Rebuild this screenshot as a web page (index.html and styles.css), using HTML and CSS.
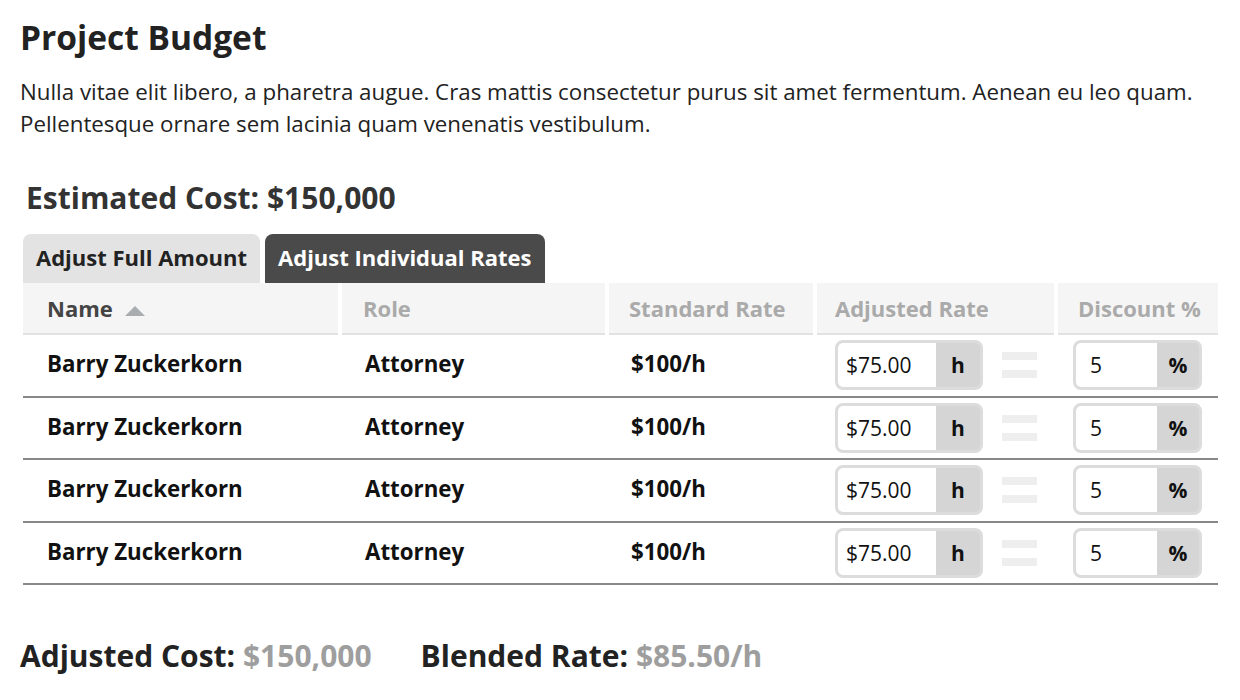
FILE: index.html
```html
<!DOCTYPE html>
<html lang="en">
<head>
<meta charset="utf-8">
<title>Project Budget</title>
<link rel="stylesheet" href="styles.css">
</head>
<body>
<main class="page">
  <h1 class="title">Project Budget</h1>
  <p class="intro">Nulla vitae elit libero, a pharetra augue. Cras mattis consectetur purus sit amet fermentum. Aenean eu leo quam.<br>Pellentesque ornare sem lacinia quam venenatis vestibulum.</p>

  <section class="budget">
    <h2 class="estimate">Estimated Cost: $150,000</h2>
    <div class="tabs">
      <button class="tab">Adjust Full Amount</button>
      <button class="tab tab-active">Adjust Individual Rates</button>
    </div>
    <table class="rates">
      <colgroup>
        <col class="c-name"><col class="c-role"><col class="c-std"><col class="c-adj"><col class="c-disc">
      </colgroup>
      <thead>
        <tr>
          <th class="h-name">Name <svg class="sort" width="20" height="10" viewBox="0 0 20 10"><polygon points="10,0 20,10 0,10" fill="#a9adb0"/></svg></th>
          <th class="h-role">Role</th>
          <th class="h-std">Standard Rate</th>
          <th class="h-adj">Adjusted Rate</th>
          <th class="h-disc">Discount %</th>
        </tr>
      </thead>
      <tbody>
        <tr>
          <td class="d-name">Barry Zuckerkorn</td><td class="d-role">Attorney</td><td class="d-std">$100/h</td>
          <td class="d-adj"><div class="adj-wrap"><div class="group g-rate"><span class="field">$75.00</span><span class="addon">h</span></div><span class="equals"><i></i><i></i></span></div></td>
          <td class="d-disc"><div class="group g-disc"><span class="field">5</span><span class="addon">%</span></div></td>
        </tr>
        <tr>
          <td class="d-name">Barry Zuckerkorn</td><td class="d-role">Attorney</td><td class="d-std">$100/h</td>
          <td class="d-adj"><div class="adj-wrap"><div class="group g-rate"><span class="field">$75.00</span><span class="addon">h</span></div><span class="equals"><i></i><i></i></span></div></td>
          <td class="d-disc"><div class="group g-disc"><span class="field">5</span><span class="addon">%</span></div></td>
        </tr>
        <tr>
          <td class="d-name">Barry Zuckerkorn</td><td class="d-role">Attorney</td><td class="d-std">$100/h</td>
          <td class="d-adj"><div class="adj-wrap"><div class="group g-rate"><span class="field">$75.00</span><span class="addon">h</span></div><span class="equals"><i></i><i></i></span></div></td>
          <td class="d-disc"><div class="group g-disc"><span class="field">5</span><span class="addon">%</span></div></td>
        </tr>
        <tr>
          <td class="d-name">Barry Zuckerkorn</td><td class="d-role">Attorney</td><td class="d-std">$100/h</td>
          <td class="d-adj"><div class="adj-wrap"><div class="group g-rate"><span class="field">$75.00</span><span class="addon">h</span></div><span class="equals"><i></i><i></i></span></div></td>
          <td class="d-disc"><div class="group g-disc"><span class="field">5</span><span class="addon">%</span></div></td>
        </tr>
      </tbody>
    </table>
  </section>

  <div class="totals">
    <div class="total">Adjusted Cost: <span class="total-value">$150,000</span></div>
    <div class="total">Blended Rate: <span class="total-value">$85.50/h</span></div>
  </div>
</main>
</body>
</html>
```

FILE: styles.css
```css
* { box-sizing: border-box; }

body {
  margin: 0;
  background: #fff;
  font-family: "Open Sans", Lato, sans-serif;
  color: #222;
}

.page {
  padding: 17px 20px 0 20px;
}

.title {
  margin: 0;
  font-size: 33.5px;
  line-height: 40px;
  font-weight: 700;
  color: #222;
}

.intro {
  margin: 19px 0 0 0;
  font-size: 22.3px;
  line-height: 32px;
  color: #222;
}

.budget {
  padding-left: 3px;
}

.estimate {
  margin: 40px 0 0 3px;
  font-size: 30px;
  line-height: 36px;
  font-weight: 700;
  color: #333;
}

.tabs {
  display: flex;
  gap: 5px;
  margin-top: 18px;
}

.tab {
  height: 49px;
  padding: 0 13px 4px 13px;
  border: 0;
  border-radius: 8px 8px 0 0;
  background: #e3e3e3;
  color: #222;
  font-family: inherit;
  font-size: 22px;
  font-weight: 700;
}

.tab-active {
  background: #4a4a4a;
  color: #fff;
}

.rates {
  width: 1195px;
  border-collapse: collapse;
  table-layout: fixed;
}

.c-name { width: 317px; }
.c-role { width: 267px; }
.c-std { width: 208px; }
.c-adj { width: 241px; }
.c-disc { width: 162px; }

.rates th {
  height: 51px;
  padding: 0 0 1px 20px;
  background: #f5f5f5;
  border-left: 4px solid #fff;
  border-bottom: 2px solid #e2e2e2;
  text-align: left;
  font-size: 22px;
  font-weight: 700;
  color: #aaa;
  white-space: nowrap;
}

.rates th.h-name {
  border-left: 0;
  padding-left: 24px;
  color: #444;
}
.rates th.h-role { padding-left: 21px; }
.rates th.h-std { padding-left: 20px; }
.rates th.h-adj { padding-left: 18px; }
.rates th.h-disc { padding-left: 20px; }

.sort {
  margin-left: 6px;
  vertical-align: 1px;
}

.rates td {
  height: 62.5px;
  padding: 0 0 3px 0;
  border-bottom: 2px solid #888;
  font-size: 22.3px;
  font-weight: 700;
  color: #111;
}

.d-name { padding-left: 24px !important; }
.d-role { padding-left: 25px !important; }
.d-std { padding-left: 24px !important; }
.d-adj { padding-left: 20px !important; padding-bottom: 0 !important; }
.d-disc { padding-left: 17px !important; padding-bottom: 0 !important; }

.adj-wrap {
  display: flex;
  align-items: center;
  gap: 19px;
}

.group {
  display: flex;
  height: 50px;
  border: 3px solid #dcdcdc;
  border-radius: 8px;
  overflow: hidden;
  background: #d5d5d5;
}

.g-rate { width: 148px; }
.g-disc { width: 129px; }

.field {
  display: flex;
  align-items: center;
  flex: 1;
  padding-left: 8px;
  background: #fff;
  font-weight: 400;
  font-size: 21px;
  color: #111;
}

.g-disc .field { padding-left: 14px; }

.addon {
  display: flex;
  align-items: center;
  justify-content: center;
  width: 44px;
  font-weight: 700;
  font-size: 21px;
  color: #111;
}

.g-disc .addon { width: 42px; }

.equals {
  display: flex;
  flex-direction: column;
  gap: 10px;
}

.equals i {
  display: block;
  width: 35px;
  height: 8px;
  background: #eee;
}

.totals {
  display: flex;
  gap: 49px;
  margin-top: 53px;
}

.total {
  font-size: 30px;
  line-height: 36px;
  font-weight: 700;
  color: #222;
}

.total-value {
  color: #9e9e9e;
}
```
